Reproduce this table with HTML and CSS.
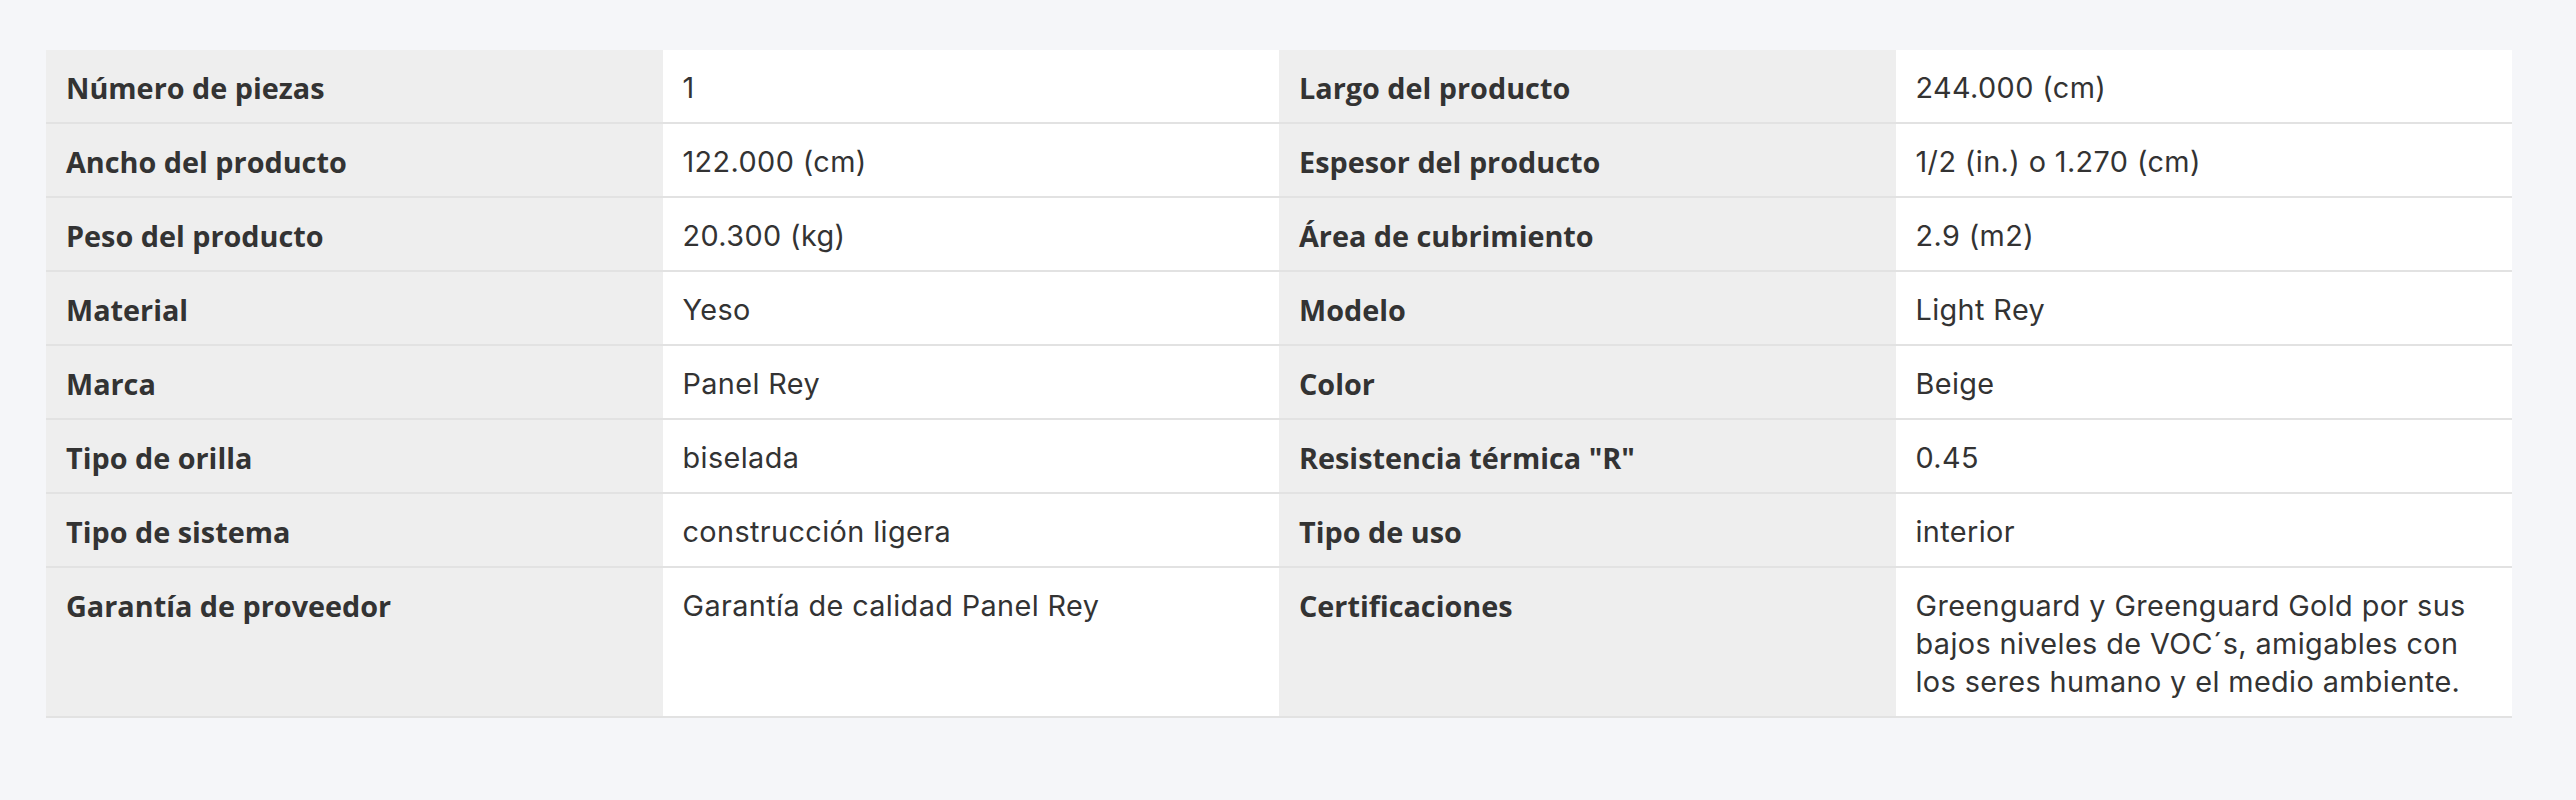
FILE: index.html
```html
<!DOCTYPE html>
<html lang="es">
<head>
<meta charset="utf-8">
<title>Especificaciones</title>
<link rel="stylesheet" href="styles.css">
</head>
<body>
<main class="page">
  <table class="specs">
    <colgroup><col><col><col><col></colgroup>
    <tbody>
      <tr>
        <th>Número de piezas</th><td>1</td>
        <th>Largo del producto</th><td>244.000 (cm)</td>
      </tr>
      <tr>
        <th>Ancho del producto</th><td>122.000 (cm)</td>
        <th>Espesor del producto</th><td>1/2 (in.) o 1.270 (cm)</td>
      </tr>
      <tr>
        <th>Peso del producto</th><td>20.300 (kg)</td>
        <th>Área de cubrimiento</th><td>2.9 (m2)</td>
      </tr>
      <tr>
        <th>Material</th><td>Yeso</td>
        <th>Modelo</th><td>Light Rey</td>
      </tr>
      <tr>
        <th>Marca</th><td>Panel Rey</td>
        <th>Color</th><td>Beige</td>
      </tr>
      <tr>
        <th>Tipo de orilla</th><td>biselada</td>
        <th>Resistencia térmica "R"</th><td>0.45</td>
      </tr>
      <tr>
        <th>Tipo de sistema</th><td>construcción ligera</td>
        <th>Tipo de uso</th><td>interior</td>
      </tr>
      <tr>
        <th>Garantía de proveedor</th><td>Garantía de calidad Panel Rey</td>
        <th>Certificaciones</th><td>Greenguard y Greenguard Gold por sus bajos niveles de VOC´s, amigables con los seres humano y el medio ambiente.</td>
      </tr>
    </tbody>
  </table>
</main>
</body>
</html>
```
FILE: styles.css
```css
html, body {
  margin: 0;
  background: #f5f6f9;
}
.page {
  padding: 50px 64px 0 46px;
}
.specs {
  width: 100%;
  table-layout: fixed;
  border-collapse: collapse;
  border-spacing: 0;
}
.specs col {
  width: 25%;
}
.specs tr {
  border-bottom: 2px solid #e2e2e2;
}
.specs th,
.specs td {
  padding: 19px 20px 15px 20px;
  line-height: 38px;
  font-size: 28.8px;
  color: #333333;
  text-align: left;
  vertical-align: top;
}
.specs th {
  background: #eeeeee;
  font-family: "Open Sans", "Noto Sans", sans-serif;
  font-weight: 700;
}
.specs td {
  background: #ffffff;
  font-family: "Inter", "Open Sans", sans-serif;
  font-weight: 400;
  letter-spacing: 0.4px;
}
```
